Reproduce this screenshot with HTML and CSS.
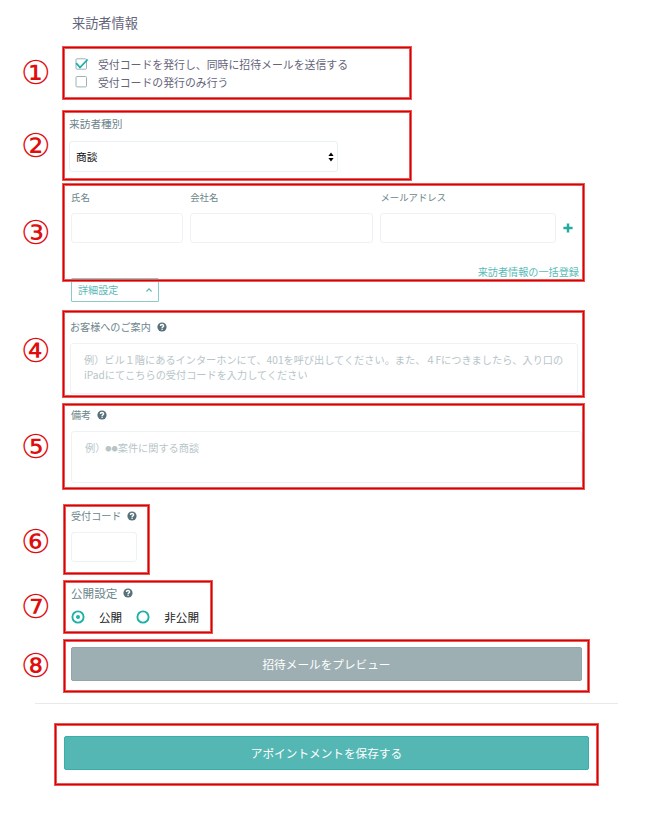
FILE: index.html
```html
<!DOCTYPE html>
<html lang="ja">
<head>
<meta charset="utf-8">
<title>来訪者情報</title>
<link rel="stylesheet" href="styles.css">
</head>
<body>
<svg class="defs" width="0" height="0">
  <symbol id="help" viewBox="0 0 10 10">
    <circle cx="5" cy="5" r="4.6" fill="#56717a"/>
    <path d="M3.4 4.1C3.4 2 6.6 2 6.6 3.9C6.6 4.9 5.1 4.8 5.1 6" fill="none" stroke="#fff" stroke-width="1.4"/>
    <rect x="4.4" y="6.6" width="1.4" height="1.3" fill="#fff"/>
  </symbol>
</svg>
<main>
  <h1>来訪者情報</h1>

  <section class="row row-1">
    <span class="num">①</span>
    <div class="box">
      <label class="check"><svg class="tick" viewBox="0 0 14 14"><rect x="1" y="1.8" width="10.5" height="10.4" rx="1" fill="#fff" stroke="#9db2b6"/><path d="M1.2 6.2L5 10.5L12.6 2.5" fill="none" stroke="#18b0a8" stroke-width="1.8"/></svg>受付コードを発行し、同時に招待メールを送信する</label>
      <label class="check"><svg class="tick" viewBox="0 0 14 14"><rect x="1" y="1.5" width="10.5" height="10.4" rx="1" fill="#fff" stroke="#9db2b6"/></svg>受付コードの発行のみ行う</label>
    </div>
  </section>

  <section class="row row-2">
    <span class="num">②</span>
    <div class="box">
      <div class="label">来訪者種別</div>
      <div class="select">商談<svg width="6" height="10" viewBox="0 0 6 10"><path d="M.4 4L3 .4L5.6 4ZM.4 6L3 9.6L5.6 6Z"/></svg></div>
    </div>
  </section>

  <section class="row row-3">
    <span class="num">③</span>
    <div class="box">
      <div class="visitor">
        <div><div class="label">氏名</div><div class="input"></div></div>
        <div><div class="label">会社名</div><div class="input"></div></div>
        <div><div class="label">メールアドレス</div><div class="input"></div></div>
        <svg class="plus" width="10" height="10" viewBox="0 0 10 10"><path d="M5 .4V9.6M.4 5H9.6" stroke="#26aaa2" stroke-width="2.5"/></svg>
      </div>
      <a class="bulk">来訪者情報の一括登録</a>
    </div>
  </section>

  <div class="detail">詳細設定<svg width="6" height="4" viewBox="0 0 6 4"><path d="M.4 3.5L3 .9L5.6 3.5" fill="none" stroke="#5ab9b6" stroke-width="1.2"/></svg></div>

  <section class="row row-4">
    <span class="num">④</span>
    <div class="box">
      <div class="label">お客様へのご案内<svg class="help"><use href="#help"/></svg></div>
      <div class="textarea">例）ビル１階にあるインターホンにて、401を呼び出してください。また、４Fにつきましたら、入り口の<br>iPadにてこちらの受付コードを入力してください</div>
    </div>
  </section>

  <section class="row row-5">
    <span class="num">⑤</span>
    <div class="box">
      <div class="label">備考<svg class="help"><use href="#help"/></svg></div>
      <div class="textarea">例）<span class="dots">●●</span>案件に関する商談</div>
    </div>
  </section>

  <section class="row row-6">
    <span class="num">⑥</span>
    <div class="box">
      <div class="label">受付コード<svg class="help"><use href="#help"/></svg></div>
      <div class="input"></div>
    </div>
  </section>

  <section class="row row-7">
    <span class="num">⑦</span>
    <div class="box">
      <div class="label">公開設定<svg class="help"><use href="#help"/></svg></div>
      <div class="radios">
        <svg class="radio" viewBox="0 0 14 14"><circle cx="7" cy="7" r="5.6" fill="none" stroke="#1fb1a9" stroke-width="1.9"/><circle cx="7" cy="7" r="2" fill="#1fb1a9"/></svg><span class="open">公開</span>
        <svg class="radio" viewBox="0 0 14 14"><circle cx="7" cy="7" r="5.6" fill="none" stroke="#1fb1a9" stroke-width="1.9"/></svg><span>非公開</span>
      </div>
    </div>
  </section>

  <section class="row row-8">
    <span class="num">⑧</span>
    <div class="box"><div class="button preview">招待メールをプレビュー</div></div>
  </section>

  <hr>

  <section class="box save-box"><div class="button save">アポイントメントを保存する</div></section>
</main>
</body>
</html>
```

FILE: styles.css
```css
* { box-sizing: border-box; }
body {
  margin: 0;
  background: #fff;
  font-family: "Noto Sans CJK JP", "Noto Sans", sans-serif;
  font-size: 10.1px;
  color: #6d858b;
}
.defs { display: block; position: absolute; }
main { height: 814px; display: flow-root; white-space: nowrap; }
svg { flex: none; }
h1 {
  margin: 13px 0 0 72px;
  height: 20px;
  font-size: 13.2px;
  line-height: 20px;
  font-weight: 400;
  color: #65657a;
}
.row { display: flex; align-items: center; padding-left: 21px; }
.num {
  width: 41px;
  flex: none;
  font-family: "DejaVu Sans", "Noto Sans CJK JP", sans-serif;
  font-size: 33px;
  line-height: 26px;
  color: #df0e0e;
}
.box {
  position: relative;
  z-index: 1;
  height: 100%;
  border: 1px solid #e65a5a;
  outline: 1px solid #dc0000;
  outline-offset: -2px;
  box-shadow: inset 0 0 0 2px #e65a5a;
}
.label { display: flex; align-items: center; height: 16px; line-height: 16px; }
.help { width: 10px; height: 10px; margin-left: 6px; }
.input { border: 1px solid #edf2f4; border-radius: 3px; height: 30px; }

.row-1 { margin-top: 13px; height: 54px; }
.row-1 .box { width: 350px; padding: 8.5px 0 0 12px; }
.check {
  display: flex;
  align-items: center;
  height: 17.5px;
  font-size: 10.88px;
  color: #65657a;
}
.tick { width: 14px; height: 14px; margin-right: 9px; }

.row-2 { margin-top: 10px; height: 71px; }
.row-2 .box { width: 350px; padding: 5px 0 0 6px; }
.row-2 .label { font-size: 10.7px; }
.select {
  display: flex;
  align-items: center;
  justify-content: space-between;
  width: 269px;
  height: 31px;
  margin-top: 9px;
  padding: 0 3px 0 6px;
  border: 1px solid #e8f0f3;
  border-radius: 3px;
  font-size: 10.7px;
  color: #111;
}

.row-3 { margin-top: 2px; height: 99px; }
.row-3 .box { width: 523px; padding: 5px 0 0 8px; }
.row-3 .label { font-size: 9.4px; }
.visitor { display: grid; grid-template-columns: 112px 183px 176px 10px; column-gap: 7.2px; }
.visitor .input { margin-top: 8px; }
.visitor .plus { align-self: end; margin: 0 0 10.5px -1px; }
.bulk {
  display: block;
  margin: 20.5px 5px 0 0;
  text-align: right;
  line-height: 16px;
  font-size: 10.15px;
  color: #58bcb7;
}
.detail {
  display: flex;
  align-items: center;
  justify-content: space-between;
  width: 88px;
  height: 24px;
  margin: -4px 0 0 71px;
  padding: 0 6px 1px;
  border: 1px solid #8acbc9;
  border-radius: 1px;
  color: #5ab9b6;
}

.row-4 { margin-top: 8px; height: 88px; }
.row-4 .num { margin-top: -7px; }
.row-4 .box { width: 523px; padding: 8px 0 0 7px; }
.textarea {
  width: 508px;
  height: 51px;
  margin-top: 8px;
  padding: 9px 13px;
  border: 1px solid #edf2f4;
  border-radius: 3px;
  line-height: 14.5px;
  font-size: 10.19px;
  color: #b7c5c8;
}
.row-5 { margin-top: 5px; height: 87px; }
.row-5 .box { width: 523px; padding: 3px 0 0 8px; }
.row-5 .textarea { width: 511px; height: 52px; }
.dots { font-size: 6.2px; vertical-align: 1.5px; line-height: 1; }

.row-6 { margin-top: 14px; height: 71px; }
.row-6 .num { margin-top: 5px; }
.row-6 .box { width: 87px; margin-left: 1px; padding: 3px 0 0 7px; }
.row-6 .input { width: 66px; margin-top: 8px; }

.row-7 { margin-top: 5px; height: 54px; }
.row-7 .box { width: 150px; margin-left: 1px; padding: 4px 0 0 7px; }
.row-7 .label { font-size: 11.6px; }
.radios { display: flex; align-items: center; height: 18px; margin-top: 7px; font-size: 11.6px; color: #222; }
.radio { width: 14px; height: 14px; margin-right: 14px; }
.open { margin-right: 14px; }

.row-8 { margin-top: 5px; height: 54px; }
.row-8 .box { width: 527px; margin-left: 1px; padding: 7px 0 0 7px; }
.button {
  height: 34px;
  border-radius: 2px;
  line-height: 32px;
  text-align: center;
  color: #fff;
  font-size: 11.65px;
}
.preview { width: 511px; background: #9eafb3; border: 1px solid #92a5a9; }
hr { width: 583px; height: 1px; margin: 10px 0 0 35px; border: 0; background: #e9e9e9; }
.save-box { width: 545px; height: 63px; margin: 19px 0 0 54px; padding: 12px 0 0 9px; }
.save { width: 525px; background: #54b7b4; border: 1px solid #3aaeaa; }
```
